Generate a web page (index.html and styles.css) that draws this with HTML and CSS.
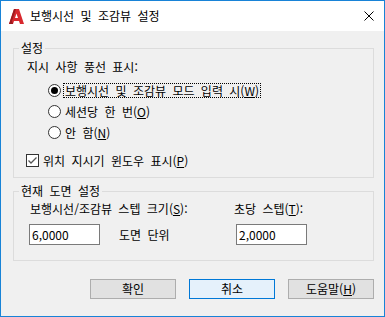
FILE: index.html
```html
<!DOCTYPE html>
<html lang="ko">
<head>
    <meta charset="UTF-8">
    <title>보행시선 및 조감뷰 설정</title>
    <link rel="stylesheet" href="styles.css">
</head>
<body>
<div class="window">
    <div class="titlebar">
        <svg class="appicon" width="15" height="15" viewBox="0 0 15 15">
            <path d="M0 15 L5 0 H10 L15 15 H11 L10 12 H5 L4 15 Z M6 9 H9 L7.5 4.5 Z" fill="#d8282e" fill-rule="evenodd"/>
            <path d="M0 15 L5 0 H7 L3 12 L4 15 Z" fill="#9c1a1f"/>
        </svg>
        <span class="title">보행시선 및 조감뷰 설정</span>
        <svg class="close" width="10" height="10" viewBox="0 0 10 10">
            <path d="M0.5 0.5 L9.5 9.5 M9.5 0.5 L0.5 9.5" stroke="#000" stroke-width="1"/>
        </svg>
    </div>

    <div class="content">
        <fieldset class="group group1">
            <legend>설정</legend>
            <div class="heading">지시 사항 풍선 표시:</div>
            <div class="radios">
                <div class="option">
                    <span class="radio checked"></span>
                    <span class="focus">보행시선 및 조감뷰 모드 입력 시(<u>W</u>)</span>
                </div>
                <div class="option">
                    <span class="radio"></span>
                    <span class="label">세션당 한 번(<u>O</u>)</span>
                </div>
                <div class="option">
                    <span class="radio"></span>
                    <span class="label">안 함(<u>N</u>)</span>
                </div>
            </div>
            <div class="option check-row">
                <span class="checkbox">
                    <svg width="11" height="11" viewBox="0 0 11 11">
                        <path d="M1.5 5.5 L4 8 L9.5 2.5" stroke="#555" stroke-width="1.3" fill="none"/>
                    </svg>
                </span>
                <span class="label">위치 지시기 윈도우 표시(<u>P</u>)</span>
            </div>
        </fieldset>

        <fieldset class="group group2">
            <legend>현재 도면 설정</legend>
            <div class="steps">
                <div class="step-label">보행시선/조감뷰 스텝 크기(<u>S</u>):</div>
                <div class="step-label">초당 스텝(<u>T</u>):</div>
                <div class="cell">
                    <input type="text" class="field" value="6,0000">
                    <span class="unit">도면 단위</span>
                </div>
                <div class="cell">
                    <input type="text" class="field second" value="2,0000">
                </div>
            </div>
        </fieldset>

        <div class="buttons">
            <button>확인</button>
            <button class="default">취소</button>
            <button>도움말(<u>H</u>)</button>
        </div>
    </div>
</div>
</body>
</html>
```

FILE: styles.css
```css
body{
    margin: 0;
    font-family: "Noto Sans CJK KR", "Noto Sans", sans-serif;
    font-size: 12px;
    color: #000;
}
.window{
    width: 385px;
    height: 317px;
    box-sizing: border-box;
    border: 1px solid #1883d7;
    background-color: #f0f0f0;
}
.titlebar{
    height: 30px;
    background-color: white;
    display: flex;
    align-items: center;
}
.appicon{
    margin-left: 8px;
}
.title{
    margin-left: 6px;
    word-spacing: 3px;
    line-height: 16px;
}
.close{
    margin-left: auto;
    margin-right: 10px;
}
.content{
    padding: 9px 10px 0 12px;
}
.group{
    border: 1px solid #dcdcdc;
    margin: 0;
    padding: 0 0 0 5px;
    min-inline-size: 0;
}
.group legend{
    padding: 0 2px;
    line-height: 16px;
    word-spacing: 3px;
}
.group1{
    padding-top: 3px;
    padding-bottom: 7px;
}
.heading{
    margin-left: 8px;
    line-height: 16px;
    word-spacing: 3px;
}
.radios{
    margin-top: 5px;
    margin-left: 29px;
}
.option{
    display: flex;
    align-items: center;
    height: 21px;
    word-spacing: 3px;
}
.radio{
    width: 11px;
    height: 11px;
    border: 1px solid #333;
    border-radius: 50%;
    background-color: white;
    position: relative;
    margin-right: 3px;
}
.radio.checked::after{
    content: "";
    position: absolute;
    left: 2px;
    top: 2px;
    width: 7px;
    height: 7px;
    border-radius: 50%;
    background-color: #000;
}
.focus{
    outline: 1px dotted #000;
    padding: 0 1px;
    line-height: 13px;
}
.label{
    padding-left: 1px;
}
.check-row{
    margin-top: 7px;
    height: 20px;
    margin-left: 7px;
}
.checkbox{
    width: 11px;
    height: 11px;
    border: 1px solid #333;
    background-color: white;
    display: flex;
    align-items: center;
    justify-content: center;
    margin-right: 3px;
}
.group2{
    margin-top: 5px;
    padding-top: 2px;
    padding-bottom: 15px;
}
.steps{
    display: grid;
    grid-template-columns: 204px auto;
    row-gap: 7px;
    margin-left: 10px;
}
.step-label{
    line-height: 16px;
    word-spacing: 3px;
    padding-left: 1px;
}
.cell{
    display: flex;
    align-items: center;
}
.field{
    width: 71px;
    height: 21px;
    box-sizing: border-box;
    border: 1px solid #7a7a7a;
    background-color: white;
    padding: 0 2px;
    font-family: inherit;
    font-size: 12px;
    color: #000;
    outline: none;
}
.unit{
    margin-left: 19px;
    word-spacing: 3px;
}
.field.second{
    margin-left: 3px;
}
.buttons{
    display: flex;
    justify-content: flex-end;
    gap: 13px;
    margin-top: 18px;
}
.buttons button{
    width: 86px;
    height: 20px;
    box-sizing: border-box;
    border: 1px solid #adadad;
    background-color: #e1e1e1;
    font-family: inherit;
    font-size: 12px;
    color: #000;
    padding: 0;
    line-height: 16px;
}
.buttons button.default{
    border-color: #0078d7;
    background-color: #e5f1fb;
}
```
